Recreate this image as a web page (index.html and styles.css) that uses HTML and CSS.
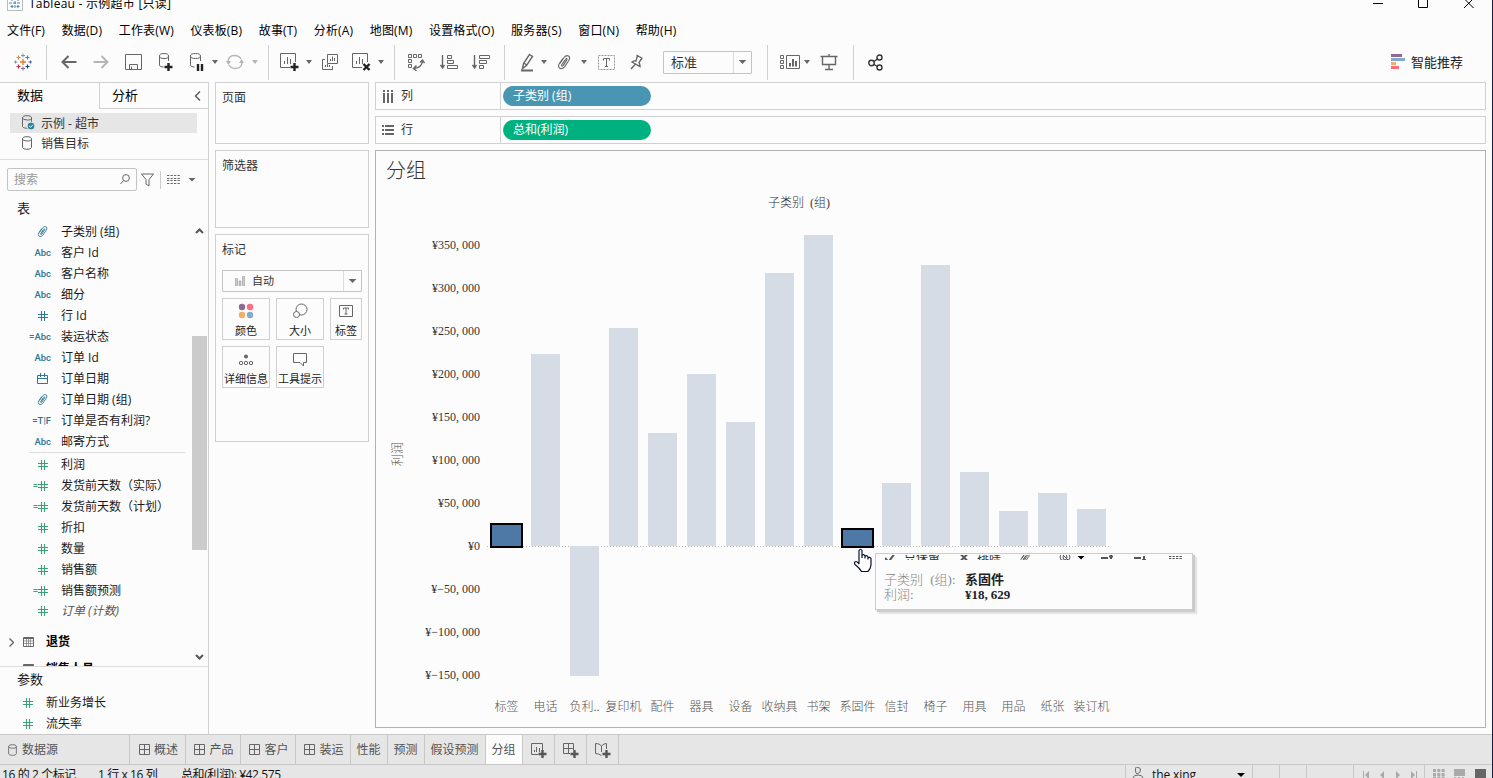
FILE: index.html
```html
<!DOCTYPE html>
<html lang="zh-CN">
<head>
    <meta charset="UTF-8">
    <meta name="viewport" content="width=device-width, initial-scale=1.0">
    <title>Tableau - 示例超市</title>
    <link rel="stylesheet" href="styles.css">
</head>
<body>
    <!-- Shared icons -->
    <svg class="sprite">
        <symbol id="logo" viewBox="0 0 18 18">
            <path d="M9 6v6M6 9h6" stroke="#e8762b" stroke-width="1.3"/>
            <path d="M9 0.5v4M7 2.5h4" stroke="#6f9bb5"/>
            <path d="M9 13.5v4M7 15.5h4" stroke="#7b6f9f"/>
            <path d="M4.5 2.5v4M2.5 4.5h4" stroke="#e88a35" stroke-width="1.2"/>
            <path d="M13.5 2.5v4M11.5 4.5h4" stroke="#53869b" stroke-width="1.2"/>
            <path d="M4.5 11.5v4M2.5 13.5h4" stroke="#c72c48" stroke-width="1.2"/>
            <path d="M13.5 11.5v4M11.5 13.5h4" stroke="#1f447e" stroke-width="1.2"/>
            <path d="M1.5 7.5v3M0 9h3.5" stroke="#5ea5ac"/>
            <path d="M16.5 7.5v3M14.5 9h3.5" stroke="#58579b"/>
        </symbol>
        <symbol id="clip" viewBox="0 0 14 16">
            <path d="M3 9.5L7 3.5Q9.5 0.5 11.8 2.2Q13.5 3.8 11.8 6.5L7.5 12.8Q5 15.8 2.5 14Q0.6 12.3 2.5 9.2L5.8 4.5M5 10.5L8.8 5Q10 3.8 10 5.5L6.3 11.3Q4.8 12.8 4.5 11.3L7.5 6.5" fill="none" stroke="currentColor" stroke-width="1.1"/>
        </symbol>
        <symbol id="hash" viewBox="0 0 10 10">
            <path d="M3.5 0v10M6.5 0v10M0 3.5h10M0 6.5h10" fill="none" stroke="currentColor" stroke-width="1.1"/>
        </symbol>
        <symbol id="calendar" viewBox="0 0 11 11">
            <path d="M0.5 2.5h10v8h-10zM0.5 5.5h10M3.5 0v4M7.5 0v4" fill="none" stroke="currentColor"/>
        </symbol>
        <symbol id="database" viewBox="0 0 10 14">
            <path d="M0.5 3v8.5Q1 13.3 5 13.3T9.5 11.5V3M0.5 3Q0.5 0.7 5 0.7T9.5 3T5 5T0.5 3z" fill="none" stroke="currentColor"/>
        </symbol>
        <symbol id="table" viewBox="0 0 11 10">
            <path d="M0.5 0.5h10v9h-10zM0.5 1.5h10" fill="none" stroke="currentColor"/>
            <path d="M1 4h9M1 6.5h9M3.5 2v7M5.5 2v7M7.5 2v7" stroke="currentColor" stroke-width=".6"/>
        </symbol>
        <symbol id="dashboard" viewBox="0 0 11 11">
            <path d="M0.5 0.5h10v10h-10zM5.5 0v11M0 5.5h11" fill="none" stroke="currentColor"/>
        </symbol>
        <symbol id="rows" viewBox="0 0 13 9">
            <path d="M0 0.5h13M0 3.500h13M0 5.500h13M0 8.500h13" stroke="currentColor" stroke-dasharray="2.300 1.200"/>
        </symbol>
    </svg>

    <header class="titlebar">
        <svg class="app-icon" width="16" height="16"><rect x="0.5" y="0.5" width="15" height="15" fill="#fff" stroke="#bbb"/><path d="M8 2v12M2 8h12M5 3v3M3.5 4.5h3M11 3v3M9.5 4.5h3M5 10v3M3.5 11.5h3M11 10v3M9.5 11.5h3" stroke="#4785ac" stroke-dasharray="3 1"/></svg>
        <span class="app-title">Tableau - 示例超市 [只读]</span>
        <svg class="window-buttons" width="102" height="11"><path d="M0 5.5h10M45.5 0.5h9v9h-9z" fill="none" stroke="#000"/><path d="M91 0.5l9.5 9.5M100.5 0.5l-9.5 9.5" stroke="#000"/></svg>
    </header>

    <nav class="menubar">
        <span>文件(F)</span><span>数据(D)</span><span>工作表(W)</span><span>仪表板(B)</span><span>故事(T)</span><span>分析(A)</span><span>地图(M)</span><span>设置格式(O)</span><span>服务器(S)</span><span>窗口(N)</span><span>帮助(H)</span>
    </nav>

    <div class="toolbar">
        <span class="tool logo-tool"><svg width="18" height="18"><use href="#logo"/></svg></span>
        <i class="sep"></i>
        <span class="tool first"><svg width="16" height="14"><path d="M15.5 7H1.5M7.5 1L1.5 7l6 6" class="line bold"/></svg></span>
        <span class="tool dim"><svg width="16" height="14"><path d="M0.5 7h14M8.5 1l6 6-6 6" class="line bold"/></svg></span>
        <span class="tool"><svg width="17" height="17"><path d="M0.5 0.5h16v15h-16zM4.5 15.5v-5h8v5M6.5 15.5v-3" class="line"/></svg></span>
        <span class="tool"><svg width="18" height="20"><path d="M3.5 4v9.5q1 1.5 4 1.5M12.5 4v5M3.5 4q0-2.5 4.5-2.5T12.5 4T8 6.5T3.5 4z" class="line"/><path d="M12.5 11v8M8.5 15h8" class="line plus"/></svg></span>
        <span class="tool pause"><svg width="18" height="20"><path d="M3.5 4v9.5q1 1.5 4 1.5M13.5 4v5M3.5 4q0-2.5 5-2.5T13.5 4T8.5 6.5T3.5 4z" class="line"/><path d="M11 12v7M15 12v7" class="line plus"/></svg></span>
        <i class="caret"></i>
        <span class="tool narrow dim"><svg width="18" height="16"><path d="M2 8Q2 1.5 8.5 1.5Q13 1.5 15 5M16 8Q16 14.5 9.5 14.5Q5 14.5 3 11" class="line heavy"/><path d="M0 7h5l-2.5 4zM13 9h5l-2.5-4z" fill="currentColor"/></svg></span>
        <i class="caret dim"></i>
        <i class="sep after-refresh"></i>
        <span class="tool narrow second"><svg width="20" height="20"><path d="M11 15.5H1.5V1.5h15V10M5.5 12V9M8.5 12V5M11.5 12V7" class="line"/><path d="M15.5 11v8M11.5 15h8" class="line plus"/></svg></span>
        <i class="caret"></i>
        <span class="tool"><svg width="18" height="18"><path d="M6.5 1.5h10v9h-10zM4 6.5H1.5v10h10V13M9.5 8V6M11.5 8V3.5M13.5 8V5M4.5 14V12M6.5 14V11M8.5 14V12" class="line"/></svg></span>
        <span class="tool narrow"><svg width="20" height="20"><path d="M11 15.5H1.5V1.5h15V10M5.5 12V9M8.5 12V5M11.5 12V7" class="line"/><path d="M12.5 12l6 6M18.5 12l-6 6" class="line plus"/></svg></span>
        <i class="caret"></i>
        <i class="sep after-clear"></i>
        <span class="tool swap"><svg width="18" height="18"><path d="M1.5 1.5h3v3h-3zM6.5 1.5h3v3h-3zM11.5 1.5h3v3h-3zM1.5 6.5h3v3h-3zM1.5 11.5h3v3h-3z" class="line"/><path d="M15.500 8Q15 14.500 7 15.500M13 9.500l2.500-2.500L17.500 10M9.500 12.500l-3 3 3 2.500" class="line heavy"/></svg></span>
        <span class="tool sort"><svg width="18" height="16"><path d="M2.500 1v13M0.500 11l2 3 2-3" class="line heavy"/><path d="M7.500 1.500h4v3h-4zM7.500 6.500h6v3h-6zM7.500 11.500h10v3h-10z" class="line"/></svg></span>
        <span class="tool"><svg width="18" height="16"><path d="M2.500 1v13M0.500 11l2 3 2-3" class="line heavy"/><path d="M7.500 1.500h10v3h-10zM7.500 6.500h7v3h-7zM7.500 11.500h4v3h-4z" class="line"/></svg></span>
        <i class="sep after-sort"></i>
        <span class="tool pen"><svg width="14" height="19"><path d="M9.500 1.500l3 2-6 9-4 3 1-5zM4 10l2.500 2M3 14l1 .5" class="line heavy"/><path d="M1 17.500h12" class="line bold"/></svg></span>
        <i class="caret"></i>
        <span class="tool narrow"><svg width="14" height="16"><use href="#clip"/></svg></span>
        <i class="caret"></i>
        <span class="tool text-tool"><svg width="17" height="15"><rect x="0.5" y="0.5" width="16" height="14" class="line" stroke-dasharray="2 1"/><path d="M5.500 5.500v-2h6v2M8.500 3.500v8M7 11.500h3" class="line"/></svg></span>
        <span class="tool pin"><svg width="14" height="16"><path d="M6.5 1l6 3.5M7.5 1.5L6 7Q4 6.5 2 8l8 4.5Q10 10 9 8.5l3-4.5M5.5 10L1 15" class="line heavy"/></svg></span>
        <span class="combo fit-combo"><b>标准</b><em><i class="caret"></i></em></span>
        <i class="sep after-fit"></i>
        <span class="tool cards"><svg width="20" height="15"><path d="M0.5 0.5h3v3h-3zM0.5 5.5h3v3h-3zM0.5 10.5h3v3h-3zM6.5 0.5h13v13h-13z" class="line"/><path d="M10 11.5V8M13 11.5V4M16 11.5V6" class="line bold"/></svg></span>
        <i class="caret"></i>
        <span class="tool present"><svg width="18" height="17"><path d="M0.5 2.5h17M2.5 2.5v8h13v-8M9 0v2M9 11v4.5M5 15.5h8" class="line heavy"/></svg></span>
        <i class="sep after-present"></i>
        <span class="tool share"><svg width="15" height="17"><circle cx="3.5" cy="9" r="2.7"/><circle cx="11.5" cy="3.5" r="2.5"/><circle cx="11.5" cy="13.5" r="2.5"/><path d="M6 7.5l3.5-2.5M6 10.5l3.5 2"/></svg></span>
        <span class="show-me"><svg width="15" height="16"><path d="M0 0h11v3H0z" fill="#8d6b92"/><path d="M0 4h14v3H0z" fill="#84a9cd"/><path d="M0 8h5v3H0z" fill="#f6ad62"/><path d="M0 12h8v3H0z" fill="#fa6e7d"/></svg>智能推荐</span>
    </div>

    <main class="workspace">
        <aside class="sidebar">
            <div class="side-tabs"><span class="tab-data">数据</span><span class="tab-analysis">分析<svg width="7" height="10"><path d="M6 0.5L1.5 5 6 9.5" class="line heavy"/></svg></span></div>
            <div class="sources">
                <div class="source selected"><svg class="db-badge" width="14" height="16"><use href="#database" width="10" height="14"/><circle cx="9" cy="11" r="4" fill="#2f7f9f" stroke="#e6e6e6"/><path d="M7.2 11l1.3 1.3 2.4-2.5" fill="none" stroke="#fff"/></svg><span>示例 - 超市</span></div>
                <div class="source"><svg class="db-badge" width="14" height="14"><use href="#database" width="10" height="14"/></svg><span>销售目标</span></div>
            </div>
            <div class="search-row">
                <div class="search"><span>搜索</span><svg width="10" height="11"><circle cx="6" cy="4" r="3.4" class="line"/><path d="M3.6 6.5L0.5 10" class="line"/></svg></div>
                <svg width="13" height="14"><path d="M0.5 1h12L8 6.5V13l-3-2V6.5z" class="line"/></svg>
                <i class="mini-sep"></i>
                <svg width="13" height="9"><use href="#rows"/></svg>
                <i class="caret large"></i>
            </div>
            <div class="tables-title">表</div>
            <div class="tables">
                <div class="field-list" id="dimensions"></div>
                <div class="field-list measures" id="measures"></div>
                <div class="table-row"><svg class="expander" width="5" height="9"><path d="M0.5 0.5l4 4-4 4" class="line heavy"/></svg><svg width="11" height="10"><use href="#table"/></svg><b>退货</b></div>
                <div class="table-row next"><svg class="expander" width="5" height="9"></svg><svg width="11" height="10"><use href="#table"/></svg><b>销售人员</b></div>
                <div class="scrollbar">
                    <svg width="9" height="6"><path d="M1 5l3.5-3.5L8 5" class="line bold"/></svg>
                    <i class="thumb"></i>
                    <svg width="9" height="6"><path d="M1 1l3.5 3.5L8 1" class="line bold"/></svg>
                </div>
            </div>
            <div class="params">
                <div class="params-title">参数</div>
                <div class="param"><svg width="10" height="10"><use href="#hash"/></svg>新业务增长</div>
                <div class="param"><svg width="10" height="10"><use href="#hash"/></svg>流失率</div>
            </div>
        </aside>

        <section class="cards-column">
            <div class="card pages">页面</div>
            <div class="card filters">筛选器</div>
            <div class="card marks">
                标记
                <span class="combo mark-combo"><svg width="10" height="10"><path d="M0.5 2.5h2v7h-2zM4 5h2v4.5H4zM7.5 0.5h2v9h-2z" fill="#ccc" stroke="#999" stroke-width=".6"/></svg><b>自动</b><em><i class="caret"></i></em></span>
                <div class="mark-buttons">
                    <span class="mark"><svg width="16" height="16"><circle cx="4" cy="4" r="3.2" fill="#8d6b92"/><circle cx="12" cy="4" r="3.2" fill="#fa6e7d"/><circle cx="4" cy="12" r="3.2" fill="#f6ad62"/><circle cx="12" cy="12" r="3.2" fill="#84a9cd"/></svg>颜色</span>
                    <span class="mark"><svg width="16" height="16"><circle cx="9.5" cy="6.5" r="5.5" class="line"/><circle cx="4.500" cy="11.500" r="3" fill="#fcfcfc" stroke="#666"/></svg>大小</span>
                    <span class="mark small"><svg width="14" height="16"><path d="M0.5 2.5h13v11h-13zM4.5 6.500v-1.500h5v1.500M7 5v6M5.500 11h3" class="line"/></svg>标签</span>
                    <span class="mark"><svg width="16" height="16"><circle cx="8" cy="5.5" r="2" fill="#666"/><circle cx="3" cy="12" r="1.7" class="line"/><circle cx="8" cy="12" r="1.7" class="line"/><circle cx="13" cy="12" r="1.7" class="line"/></svg>详细信息</span>
                    <span class="mark"><svg width="16" height="16"><path d="M1.5 2.5h13v9h-3v3.5l-3.5-3.5H1.5z" class="line"/></svg>工具提示</span>
                </div>
            </div>
        </section>

        <section class="sheet">
            <div class="shelf"><span class="shelf-name"><svg width="12" height="13"><path d="M2 0v2M6 0v2M10 0v2M2 3v10M6 3v10M10 3v10" stroke="#666" stroke-width="2"/></svg>列</span><span class="pill blue">子类别 (组)</span></div>
            <div class="shelf"><span class="shelf-name"><svg width="12" height="11"><path d="M0 1h2M0 5h2M0 9h2M3 1h9M3 5h9M3 9h9" stroke="#666" stroke-width="2"/></svg>行</span><span class="pill green">总和(利润)</span></div>
            <div class="view">
                <h1>分组</h1>
                <div class="chart">
                    <div class="axis-title"><span>利润</span></div>
                    <div class="y-axis" id="y-axis"></div>
                    <div class="pane">
                        <div class="column-title">子类别 (组)</div>
                        <div class="bars" id="bars"></div>
                        <div class="x-axis" id="x-axis"></div>
                    </div>
                </div>
                <div class="tooltip">
                    <div class="commands">
                        <svg width="10" height="10"><path d="M0 5l3.5 4L10 0" class="line bold"/></svg><span class="keep">只保留</span>
                        <svg width="8" height="10"><path d="M0.5 1l7 7M7.5 1l-7 7" class="line bold"/></svg><span class="exclude">排除</span>
                        <svg class="c-clip" width="12" height="13"><use href="#clip"/></svg>
                        <svg class="c-set" width="12" height="11"><circle cx="4.500" cy="5" r="3.500" class="line"/><circle cx="7.500" cy="5" r="3.500" class="line"/><path d="M2 1l8 8" class="line"/></svg><i class="caret black"></i>
                        <svg class="c-sort" width="13" height="10"><path d="M0 5h7M8 3.5h4M10 1v5" class="line bold"/></svg>
                        <svg class="c-sort2" width="13" height="10"><path d="M0 5h7M8 7h4M10 3v4" class="line bold"/></svg>
                        <svg class="c-data" width="13" height="9"><use href="#rows"/></svg>
                    </div>
                    <dl>
                        <dt>子类别 (组):</dt><dd>系固件</dd>
                        <dt>利润:</dt><dd class="num">¥18<span>,</span>629</dd>
                    </dl>
                </div>
                <svg class="pointer" width="20" height="26" viewBox="0 0 20 26"><path d="M6 14V2.5Q7.5 0 9 2.5V10V7.5Q10.5 5.5 12 8V10.5V8.5Q13.5 6.5 15 9V11.5V10Q16.8 8.5 18 10.5V17Q17.5 21 15 23.5H8.5Q6.5 20 2 16.5Q0.5 14 3 13.5Q5 14 6 16z" fill="#fff" stroke="#0c1030" stroke-width="1.2"/></svg>
            </div>
        </section>
    </main>

    <div class="sheet-tabs">
        <span class="sheet-tab source-tab"><svg width="9" height="12"><use href="#database"/></svg>数据源</span>
        <span class="sheet-tab dash w56"><svg width="11" height="11"><use href="#dashboard"/></svg>概述</span>
        <span class="sheet-tab dash"><svg width="11" height="11"><use href="#dashboard"/></svg>产品</span>
        <span class="sheet-tab dash"><svg width="11" height="11"><use href="#dashboard"/></svg>客户</span>
        <span class="sheet-tab dash"><svg width="11" height="11"><use href="#dashboard"/></svg>装运</span>
        <span class="sheet-tab">性能</span>
        <span class="sheet-tab">预测</span>
        <span class="sheet-tab wide">假设预测</span>
        <span class="sheet-tab active">分组</span>
        <span class="sheet-tab add"><svg width="16" height="16"><path d="M7 11.5H0.5v-11h11V7M3.5 9V7M5.5 9V4M8.5 9V5" class="line"/><path d="M11.5 7v8M7.5 11h8" class="line plus-gray"/></svg></span>
        <span class="sheet-tab add"><svg width="16" height="16"><path d="M7 10.5H0.5v-10h10V7M5.5 0.5v10M0.5 5.5h10" class="line"/><path d="M11.5 7v8M7.5 11h8" class="line plus-gray"/></svg></span>
        <span class="sheet-tab add"><svg width="16" height="16"><path d="M11.5 6V0.5L9 1 6.5 3 4 1 0.5 0.5v10l3 .5 3 1.5M6.5 3v6" class="line"/><path d="M11.5 7v8M7.5 11h8" class="line plus-gray"/></svg></span>
    </div>

    <footer class="statusbar">
        <span class="st-marks">16 的 2 个标记</span>
        <span class="st-size">1 行 x 16 列</span>
        <span class="st-sum">总和(利润): ¥42,575</span>
        <span class="user"><svg width="12" height="14"><path d="M6 0.5Q8.5 0.5 8.5 3T6 6.5T3.5 3T6 0.5zM1 13v-2q.5-3 5-3t5 3v2z" class="line"/></svg>the xing<i class="caret black"></i></span>
        <span class="cell"></span><span class="cell"></span><span class="cell c47"></span>
        <span class="pager"><svg width="56" height="8"><path d="M1.5 0v8M54.5 0v8" stroke="#aaa"/><path d="M7 0L3 4l4 4zM22 0l-4 4 4 4zM34 0l4 4-4 4zM49 0l4 4-4 4z" fill="#aaa"/></svg></span>
        <span class="modes"><svg width="54" height="10"><path d="M0 1.5h12M0 5.5h12M0 9h12" stroke="#aaa" stroke-width="3" stroke-dasharray="3 1.3"/><path d="M21 0h11v7H21zM21 8h2v2h-2zM25 8h2v2h-2zM29 8h2v2h-2z" fill="#aaa"/><path d="M42 0h11v10H42z" fill="#666"/></svg></span>
    </footer>

    <script>
        const dimensions = [
            ["clip", "子类别 (组)"], ["Abc", "客户 Id"], ["Abc", "客户名称"], ["Abc", "细分"],
            ["hash", "行 Id"], ["=Abc", "装运状态"], ["Abc", "订单 Id"], ["calendar", "订单日期"],
            ["clip", "订单日期 (组)"], ["=T|F", "订单是否有利润?"], ["Abc", "邮寄方式"]
        ];
        const measures = [
            ["hash", "利润"], ["=hash", "发货前天数（实际）"], ["=hash", "发货前天数（计划）"], ["hash", "折扣"],
            ["hash", "数量"], ["hash", "销售额"], ["=hash", "销售额预测"], ["hash", "订单 (计数)"]
        ];
        const profits = [
            ["标签", 23946, true], ["电话", 223300], ["负利..", -151000], ["复印机", 253500],
            ["配件", 131400], ["器具", 200000], ["设备", 144200], ["收纳具", 317500],
            ["书架", 361600], ["系固件", 18629, true], ["信封", 73300], ["椅子", 326800],
            ["用具", 86000], ["用品", 40700], ["纸张", 61700], ["装订机", 43000]
        ];
        const pxPerYuan = 0.00086;
        const sizes = { clip: [11, 13], hash: [10, 10], calendar: [11, 11] };

        function fieldIcon(type) {
            const name = type.replace("=", "");
            if (!sizes[name]) return type;
            const [w, h] = sizes[name];
            const svg = `<svg width="${w}" height="${h}"><use href="#${name}"/></svg>`;
            return (type[0] === "=" ? "=" : "") + svg;
        }

        function renderFields(id, fields) {
            document.getElementById(id).innerHTML = fields.map(([type, name]) =>
                `<div class="field"><span class="type">${fieldIcon(type)}</span><span>${name}</span></div>`
            ).join("");
        }

        function renderAxis() {
            let html = "";
            for (let v = 350000; v >= -150000; v -= 50000) {
                const text = Math.abs(v).toLocaleString("en-US").replace(",", "<span>,</span>");
                html += `<div class="num">¥${v < 0 ? "−" : ""}${text}</div>`;
            }
            document.getElementById("y-axis").innerHTML = html;
        }

        function renderBars() {
            document.getElementById("bars").innerHTML = profits.map(([name, value, selected]) => {
                const h = Math.round(Math.abs(value) * pxPerYuan);
                const bar = `<i class="bar${selected ? " selected" : ""}" style="height:${h}px"></i>`;
                return `<div class="bar-col"><div class="above">${value > 0 ? bar : ""}</div><div class="below">${value < 0 ? bar : ""}</div></div>`;
            }).join("");
            document.getElementById("x-axis").innerHTML = profits.map(p => `<span>${p[0]}</span>`).join("");
        }

        renderFields("dimensions", dimensions);
        renderFields("measures", measures);
        renderAxis();
        renderBars();
    </script>
</body>
</html>
```

FILE: styles.css
```css
* {
    box-sizing: border-box;
}

body {
    margin: 0;
    width: 1493px;
    height: 778px;
    overflow: hidden;
    display: flex;
    flex-direction: column;
    background: #fcfcfc;
    border-right: 1px solid #16203c;
    color: #1a1a1a;
    font: 12px/16px "Open Sans", "Noto Sans CJK SC", sans-serif;
    white-space: nowrap;
}

svg {
    display: block;
    flex: none;
}

.sprite {
    display: none;
}

.line {
    fill: none;
    stroke: currentColor;
}

.heavy { stroke-width: 1.4; }
.bold { stroke-width: 2; }
.plus { stroke: #222; stroke-width: 2.4; }
.plus-gray { stroke: #555; stroke-width: 2.4; }

.caret {
    flex: none;
    width: 10px;
    height: 4px;
    background: #666;
    clip-path: polygon(20% 0, 80% 0, 50% 100%);
}

.caret.large { clip-path: polygon(10% 0, 90% 0, 50% 100%); }
.caret.black { background: #000; clip-path: polygon(10% 0, 90% 0, 50% 100%); }
.caret.dim { background: #b5b5b5; }

/* Title and menu */
.titlebar {
    display: flex;
    height: 17px;
    flex: none;
    align-items: flex-start;
    padding-left: 7px;
    color: #000;
}

.app-icon { margin-top: -5px; }

.app-title {
    margin: -4px auto 0 6px;
    letter-spacing: .25px;
}

.window-buttons {
    margin: -2px 17px 0 0;
}

.menubar {
    display: flex;
    height: 27px;
    flex: none;
    align-items: center;
    gap: 16.6px;
    padding-left: 7px;
    letter-spacing: .15px;
    color: #000;
}

/* Toolbar */
.toolbar {
    display: flex;
    height: 38px;
    flex: none;
    align-items: center;
    padding-bottom: 2px;
    color: #666;
}

.tool {
    display: flex;
    justify-content: center;
    width: 32px;
    flex: none;
}

.tool.narrow { width: 30px; }
.tool.pause { width: 29px; }
.tool.logo-tool { width: 46px; }
.tool.dim { color: #b5b5b5; }
.tool.first { margin-left: 6px; }
.tool.second { margin-left: 5px; }
.tool.swap { margin-left: 5px; }
.tool.sort { margin-left: 1px; }
.tool.pen { width: 25px; margin-left: 9px; }
.tool.text-tool { width: 34px; }
.tool.text-tool rect { stroke: #999; }
.tool.pin { width: 28px; }
.tool.cards { width: 28px; margin: 0 -2px 0 8px; }
.tool.present { width: 34px; }

.tool.share {
    margin-left: 5px;
    fill: none;
    stroke: #333;
    stroke-width: 1.4;
}

.sep {
    width: 1px;
    height: 35px;
    flex: none;
    background: #d0d0d0;
}

.sep.after-refresh, .sep.after-clear { margin-left: 8px; }
.sep.after-sort { margin-left: 7px; }
.sep.after-fit { margin-left: 15px; }
.sep.after-present { margin-left: 7px; }

.combo {
    display: flex;
    align-items: center;
    border: 1px solid #c4c4c4;
    border-radius: 1px;
}

.combo b {
    flex: 1;
    font-weight: normal;
    color: #333;
}

.combo em {
    display: flex;
    align-items: center;
    justify-content: center;
    width: 18px;
    height: 100%;
    border-left: 1px solid #ddd;
}

.combo .caret { clip-path: polygon(12% 0, 88% 0, 50% 100%); }

.fit-combo {
    width: 89px;
    height: 23px;
    margin-left: 12px;
    padding-left: 7px;
    font-size: 13px;
}

.show-me {
    display: flex;
    align-items: center;
    gap: 5px;
    margin: 0 29px 0 auto;
    font-size: 13px;
    color: #222;
}

/* Workspace */
.workspace {
    display: flex;
    height: 652px;
    flex: none;
}

.sidebar {
    display: flex;
    flex-direction: column;
    width: 209px;
    flex: none;
    border-top: 1px solid #d0d0d0;
    border-right: 1px solid #d0d0d0;
}

.side-tabs {
    display: flex;
    height: 26px;
    font-size: 13px;
    line-height: 25px;
    color: #000;
}

.tab-data {
    width: 99px;
    padding-left: 17px;
}

.tab-analysis {
    flex: 1;
    display: flex;
    align-items: center;
    justify-content: space-between;
    padding: 0 7px 0 12px;
    border: solid #d0d0d0;
    border-width: 0 0 1px 1px;
}

.tab-analysis svg { color: #555; }

.sources {
    height: 51px;
    padding: 4px 11px 0 10px;
    border-bottom: 1px solid #ddd;
}

.source {
    display: flex;
    align-items: center;
    height: 20px;
    padding-left: 12px;
    color: #333;
}

.source span { padding-top: 2px; }
.source.selected { background: #e6e6e6; }
.db-badge { margin-right: 5px; color: #666; }

.search-row {
    display: flex;
    align-items: center;
    height: 39px;
    padding-left: 7px;
    color: #666;
}

.search {
    display: flex;
    align-items: center;
    justify-content: space-between;
    width: 130px;
    height: 23px;
    margin-right: 4px;
    padding: 0 6px;
    border: 1px solid #c4c4c4;
    border-radius: 2px;
}

.search span { color: #999; }

.mini-sep {
    width: 1px;
    height: 18px;
    margin: 0 6px;
    background: #ccc;
}

.search-row .caret { margin-left: 7px; }

.tables-title {
    height: 22px;
    padding-left: 17px;
    font-size: 13px;
    line-height: 19px;
}

.tables {
    position: relative;
    height: 446px;
    overflow: hidden;
    border-bottom: 1px solid #ddd;
}

.field {
    display: flex;
    align-items: center;
    height: 21px;
}

.type {
    display: flex;
    align-items: center;
    justify-content: flex-end;
    width: 51px;
    margin-right: 10px;
    font: 500 9.5px/16px Roboto, sans-serif;
    color: #2d7694;
}

.type svg { margin-right: 3px; }
.measures .type { color: #3ca178; }
#dimensions { height: 231px; }

.measures {
    width: 156px;
    margin-left: 29px;
    padding-top: 1px;
    border-top: 1px solid #ddd;
}

.measures .type { width: 22px; }

.measures .field:last-child {
    height: 20px;
    font-style: italic;
    color: #555;
}

.table-row {
    display: flex;
    align-items: center;
    height: 26px;
    margin-top: 8px;
    padding-left: 9px;
    color: #000;
}

.table-row.next { margin: 1px 0; }
.table-row svg { color: #666; }
.expander { margin-right: 9px; }
.table-row b { margin-left: 12px; }

.scrollbar {
    position: absolute;
    top: 7px;
    right: 1px;
    display: flex;
    flex-direction: column;
    align-items: center;
    width: 15px;
    color: #555;
}

.thumb {
    width: 15px;
    height: 214px;
    margin: 102px 0 104px;
    background: #cbcbcb;
}

.params { height: 67px; overflow: hidden; }

.params-title {
    height: 25px;
    padding-left: 17px;
    font-size: 13px;
    line-height: 25px;
}

.param {
    display: flex;
    align-items: center;
    gap: 13px;
    height: 21px;
    padding-left: 23px;
}

.param svg { color: #3ca178; }

.cards-column {
    display: flex;
    flex-direction: column;
    gap: 6px;
    width: 154px;
    margin: 0 6px;
    flex: none;
}

.card {
    padding: 7px 6px 6px;
    border: 1px solid #d0d0d0;
    color: #333;
}

.pages { height: 62px; }
.filters { height: 78px; }
.marks { height: 208px; }

.mark-combo {
    height: 22px;
    margin-top: 12px;
    padding-left: 12px;
    font-size: 11px;
}

.mark-combo b { margin-left: 7px; }

.mark-buttons {
    display: flex;
    flex-wrap: wrap;
    gap: 6px;
    margin-top: 6px;
}

.mark {
    display: flex;
    flex-direction: column;
    align-items: center;
    width: 48px;
    height: 42px;
    padding-top: 4px;
    border: 1px solid #d0d0d0;
    font-size: 11px;
    line-height: 24px;
    color: #222;
}

.mark svg { color: #666; }
.mark.small { width: 32px; }

.sheet {
    display: flex;
    flex-direction: column;
    gap: 6px;
    width: 1111px;
}

.shelf {
    display: flex;
    align-items: center;
    height: 28px;
    border: 1px solid #d0d0d0;
}

.shelf-name {
    display: flex;
    align-items: center;
    gap: 7px;
    width: 125px;
    height: 100%;
    padding-left: 6px;
    border-right: 1px solid #d0d0d0;
    line-height: 18px;
    color: #333;
}

.pill {
    width: 148px;
    height: 20px;
    margin-left: 2px;
    padding-left: 10px;
    border-radius: 10px;
    line-height: 19px;
    color: #fff;
}

.pill.blue { background: #4996b2; }
.pill.green { background: #00b180; }

/* Chart */
.view {
    position: relative;
    height: 578px;
    border: 1px solid #b2b2b2;
    font-family: "Liberation Serif", "Noto Sans CJK SC", serif;
    color: #555;
}

.view h1 {
    height: 40px;
    margin: 0;
    padding-left: 10px;
    font-size: 20px;
    font-weight: 300;
    line-height: 41px;
    color: #333;
}

.chart {
    display: flex;
}

.axis-title {
    width: 30px;
    padding: 251px 0 0 14px;
}

.axis-title span {
    display: block;
    writing-mode: vertical-rl;
    text-orientation: sideways;
    transform: rotate(180deg);
    font-weight: 300;
}

.y-axis {
    width: 74px;
    padding-top: 33px;
    text-align: right;
}

.y-axis div {
    height: 43px;
    line-height: 43px;
}

.num {
    color: #333;
}

.num span {
    padding-right: 3px;
}

.pane {
    width: 624px;
    margin-left: 7px;
}

.column-title {
    height: 33px;
    line-height: 24px;
    text-align: center;
    font-weight: 300;
    word-spacing: 3px;
    color: #333;
}

.bars {
    display: flex;
    background: repeating-linear-gradient(90deg, #bbb 0 1px, transparent 1px 3px) 0 322px / 100% 1px no-repeat;
}

.bar-col {
    width: 39px;
}

.above {
    display: flex;
    align-items: flex-end;
    height: 322px;
}

.below {
    height: 151px;
}

.bar {
    display: block;
    width: 29px;
    margin-left: 5px;
    background: #d5dce5;
}

.bar.selected {
    background: #4e79a7;
    outline: 2px solid #000;
}

.x-axis {
    display: flex;
    line-height: 20px;
    font-weight: 300;
}

.x-axis span {
    width: 39px;
    text-align: center;
}

.tooltip {
    position: absolute;
    left: 499px;
    top: 402px;
    width: 318px;
    height: 57px;
    background: #fcfcfc;
    border: 1px solid #ccc;
    box-shadow: 2px 2px 1px #ccc, 4px 4px 1px #e6e6e6;
}

.commands {
    display: flex;
    align-items: center;
    height: 5px;
    margin-top: 1px;
    padding-left: 9px;
    overflow: hidden;
    font-family: "Open Sans", "Noto Sans CJK SC", sans-serif;
    color: #555;
}

.keep { margin: 0 20px 0 9px; color: #333; }
.exclude { margin: 0 18px 0 9px; color: #333; }
.c-set { margin: 0 5px 0 28px; }
.c-sort { margin-left: 15px; }
.c-sort2 { margin-left: 20px; }
.c-data { margin-left: 22px; }

.tooltip dl {
    display: grid;
    grid-template-columns: 81px 1fr;
    margin: 12px 0 0 8px;
    font-size: 13px;
    line-height: 15px;
}

.tooltip dt {
    color: #888;
    font-weight: 300;
    word-spacing: 4px;
}

.tooltip dd {
    margin: 0;
    font-weight: bold;
    color: #222;
}

.pointer {
    position: absolute;
    left: 477px;
    top: 397px;
}

/* Bottom bars */
.sheet-tabs {
    display: flex;
    height: 31px;
    flex: none;
    background: #e6e6e6;
    border: solid #c8c8c8;
    border-width: 1px 0;
}

.sheet-tab {
    display: flex;
    align-items: center;
    justify-content: center;
    gap: 5px;
    width: 37px;
    padding-right: 1px;
    border-right: 1px solid #c8c8c8;
    color: #555;
}

.sheet-tab svg { color: #666; }

.source-tab {
    width: 130px;
    justify-content: flex-start;
    padding-left: 8px;
}

.sheet-tab.dash {
    width: 55px;
    padding: 0 0 0 2px;
    gap: 4px;
}

.sheet-tab.dash.w56 { width: 56px; }
.sheet-tab.wide { width: 61px; }
.sheet-tab.add { width: 32px; padding: 0; }
.sheet-tab.active { background: #fcfcfc; }
.add svg { margin-top: 2px; }

.statusbar {
    display: flex;
    height: 13px;
    flex: none;
    overflow: hidden;
    background: #e6e6e6;
    line-height: 20px;
    letter-spacing: -.4px;
    color: #111;
}

.st-marks { width: 98px; padding-left: 2px; }
.st-size { width: 83px; }
.st-sum { flex: 1; }

.user {
    display: flex;
    align-items: flex-start;
    width: 127px;
    padding-left: 6px;
    border-left: 1px solid #c8c8c8;
    letter-spacing: -.1px;
}

.user svg { margin: 2px 8px 0 0; color: #666; }
.user .caret { margin: 8px 6px 0 auto; }

.cell {
    width: 27px;
    border-left: 1px solid #c8c8c8;
}

.cell.c47 { width: 47px; }

.pager, .modes {
    padding: 6px 0 0 8px;
    border-left: 1px solid #c8c8c8;
}

.pager { width: 71px; }
.modes { width: 68px; padding-top: 4px; }
```
